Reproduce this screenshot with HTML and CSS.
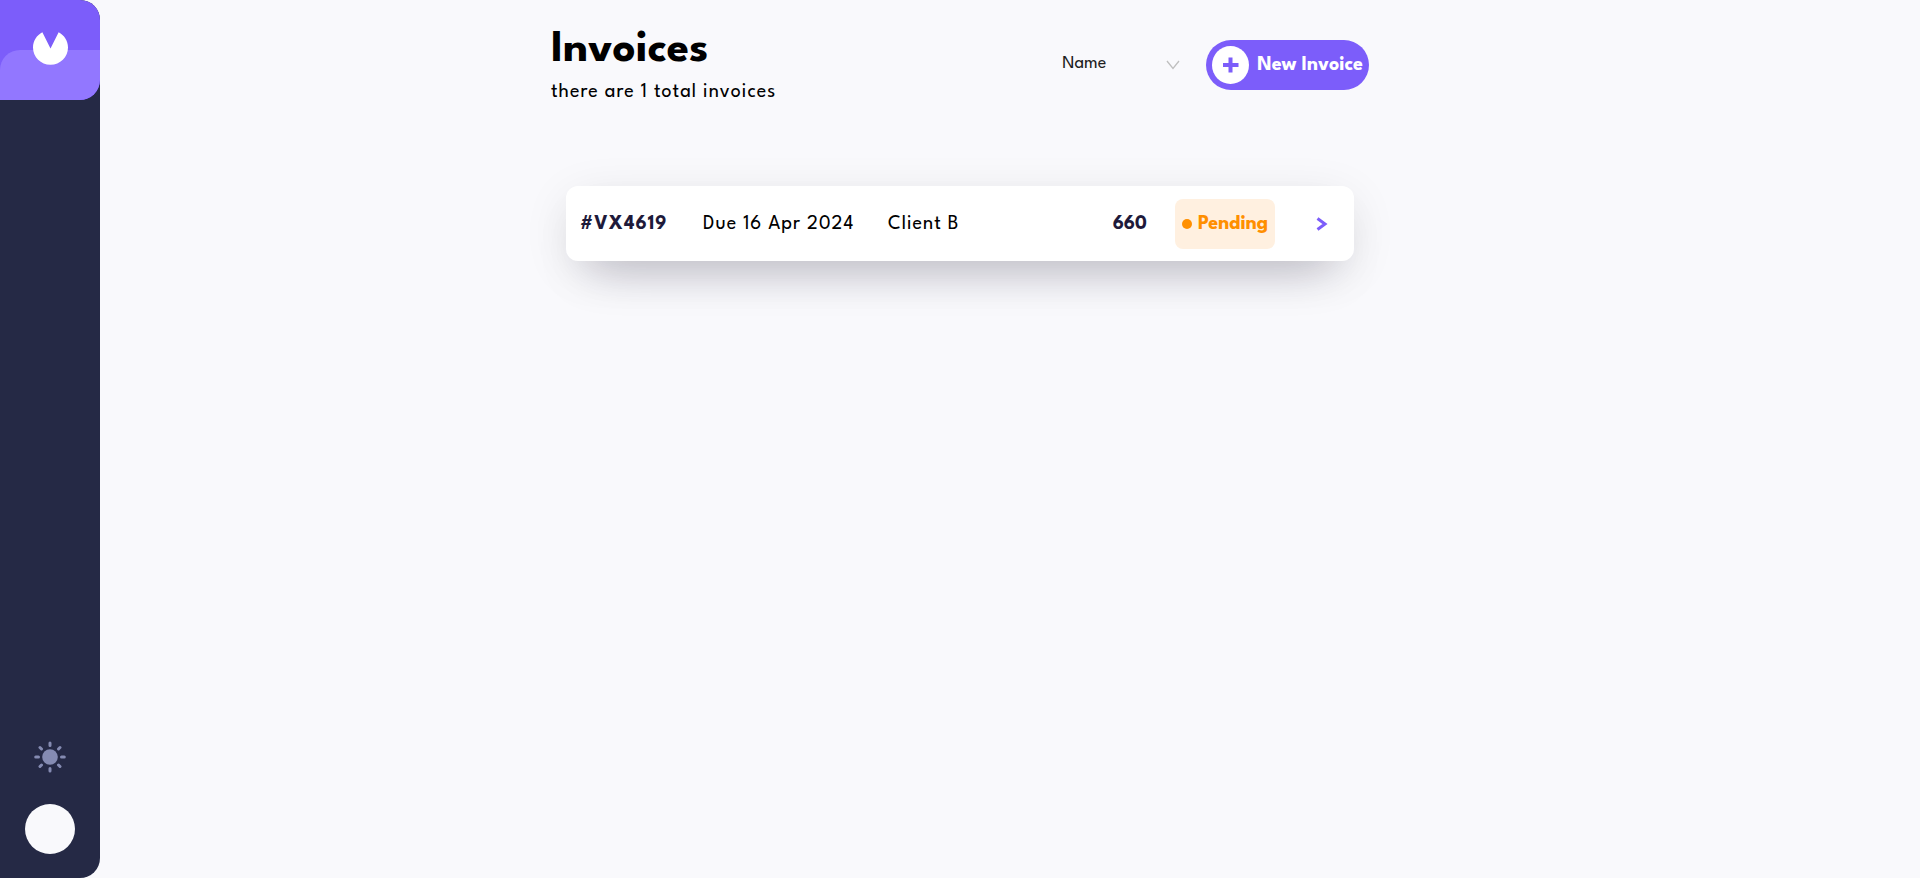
FILE: index.html
```html
<!DOCTYPE html>
<html lang="en">
<head>
<meta charset="utf-8">
<meta name="viewport" content="width=device-width, initial-scale=1">
<title>Invoices</title>
<link rel="stylesheet" href="styles.css">
</head>
<body>
<div class="app">
  <aside class="sidebar">
    <a class="brand" href="#" aria-label="Home">
      <svg class="brand-mark" viewBox="0 0 28 26" aria-hidden="true"><path fill="#fff" d="M20.513 0C24.965 2.309 28 6.91 28 12.21 28 19.826 21.732 26 14 26S0 19.826 0 12.21C0 6.91 3.035 2.309 7.487 0L14 12.9z"/></svg>
    </a>
    <div class="sidebar-tools">
      <button class="theme-toggle" type="button" aria-label="Toggle theme">
        <svg viewBox="-16 -16 32 32" width="32" height="32" aria-hidden="true">
          <circle r="7.8" fill="#858bb2"/>
          <path d="M0-14v2.4M0 14v-2.4M-14.3 0h2.8M14.3 0h-2.8M-10-9.500l1.500 1.500M10-9.500l-1.500 1.500M-10 9.500l1.500-1.500M10 9.500l-1.500-1.500" stroke="#858bb2" stroke-width="3" stroke-linecap="round"/>
        </svg>
      </button>
      <div class="avatar"></div>
    </div>
  </aside>
  <main class="content">
    <header class="page-head">
      <div class="heading">
        <h1>Invoices</h1>
        <p>there are 1 total invoices</p>
      </div>
      <div class="actions">
        <div class="filter">
          <select aria-label="Sort by"><option>Name</option></select>
          <svg class="filter-arrow" viewBox="0 0 14 10" aria-hidden="true"><path d="M1 1l6 7.500L13 1" fill="none" stroke="#bfbfbf" stroke-width="1.300"/></svg>
        </div>
        <button class="new-invoice" type="button">
          <span class="plus"><svg viewBox="0 0 16 16" width="16" height="16" aria-hidden="true"><path d="M7.500 0.500v15M0 8h15.500" stroke="#7c5dfa" stroke-width="4"/></svg></span>
          New Invoice
        </button>
      </div>
    </header>
    <a class="invoice" href="#">
      <span class="invoice-id">#VX4619</span>
      <span class="due">Due 16 Apr 2024</span>
      <span class="client">Client B</span>
      <span class="total">660</span>
      <span class="status"><span class="dot"></span>Pending</span>
      <svg class="chevron" viewBox="0 0 12 14" aria-hidden="true"><path d="M1.500 1.500L9 7l-7.500 5.500" fill="none" stroke="#7c5dfa" stroke-width="3"/></svg>
    </a>
  </main>
</div>
</body>
</html>
```
FILE: styles.css
```css
* {
  box-sizing: border-box;
}

body {
  margin: 0;
  background: #f9f9fc;
  color: #000;
  font-family: "League Spartan", Lato, sans-serif;
  font-size: 20px;
  font-weight: 400;
}

button,
select {
  border: 0;
  background: none;
  font-family: inherit;
  cursor: pointer;
}

.app {
  display: grid;
  grid-template-columns: 100px minmax(0, 1fr) 100px;
  min-height: 100vh;
}

.sidebar {
  display: flex;
  flex-direction: column;
  justify-content: space-between;
  background: #252945;
  border-radius: 0 20px 20px 0;
}

.brand {
  display: grid;
  place-items: center;
  height: 100px;
  border-radius: 0 20px 20px 0;
  background: #7c5dfa;
  overflow: hidden;
}

.brand::before {
  content: "";
  grid-area: 1 / 1;
  align-self: end;
  width: 100%;
  height: 50px;
  border-radius: 20px 0 20px 0;
  background: #9277ff;
}

.brand-mark {
  grid-area: 1 / 1;
  width: 35px;
  height: 33px;
  margin-bottom: 3px;
}

.sidebar-tools {
  display: flex;
  flex-direction: column;
  align-items: center;
  gap: 31px;
  padding-bottom: 24px;
}

.theme-toggle {
  display: flex;
  padding: 0;
}

.avatar {
  width: 50px;
  height: 50px;
  border-radius: 50%;
  background: #f9f9fc;
}

.content {
  width: 100%;
  max-width: 818px;
  margin: 0 auto;
  padding-top: 20px;
}

.page-head {
  display: flex;
  justify-content: space-between;
  align-items: center;
  height: 90px;
}

.heading h1 {
  margin: 0;
  font-size: 45px;
  line-height: 48px;
  font-weight: 700;
}

.heading p {
  margin: 6px 0 0;
  line-height: 24px;
  letter-spacing: 1px;
}

.actions {
  display: flex;
  align-items: center;
  gap: 24px;
}

.filter {
  display: grid;
  align-items: center;
  width: 120px;
}

.filter select {
  grid-area: 1 / 1;
  width: 100%;
  height: 32px;
  padding: 0 0 4px;
  appearance: none;
  color: #1f1f1f;
  font-size: 18px;
  font-weight: 400;
}

.filter-arrow {
  grid-area: 1 / 1;
  justify-self: end;
  width: 14px;
  height: 10px;
  margin-right: 2px;
  pointer-events: none;
}

.new-invoice {
  display: flex;
  align-items: center;
  gap: 8px;
  height: 50px;
  padding: 0 6px;
  border-radius: 25px;
  background: #7c5dfa;
  color: #fff;
  font-size: 20px;
  font-weight: 700;
  white-space: nowrap;
}

.plus {
  display: grid;
  place-items: center;
  width: 37px;
  height: 38px;
  border-radius: 50%;
  background: #fff;
}

.invoice {
  display: grid;
  grid-template-columns: 123px 185px 1fr auto 100px 53px;
  align-items: center;
  height: 75px;
  margin: 76px 15px 0;
  padding: 0 26px 0 14px;
  border-radius: 12px;
  background: #fff;
  color: #000;
  text-decoration: none;
  letter-spacing: 1px;
  box-shadow: rgba(0, 0, 0, 0.12) 0 10px 50px -6px, rgba(20, 10, 50, 0.36) 0 25px 50px -25px;
}

.invoice-id,
.total {
  color: #1e1a3a;
  font-weight: 700;
}

.total {
  margin-right: 28px;
  letter-spacing: 0;
}

.status {
  display: flex;
  align-items: center;
  justify-content: center;
  gap: 6px;
  height: 50px;
  border-radius: 8px;
  background: #fff0e0;
  color: #ff8f00;
  font-weight: 700;
  letter-spacing: 0;
}

.dot {
  width: 10px;
  height: 10px;
  border-radius: 50%;
  background: #ff8f00;
}

.chevron {
  justify-self: end;
  width: 12px;
  height: 14px;
}
```
